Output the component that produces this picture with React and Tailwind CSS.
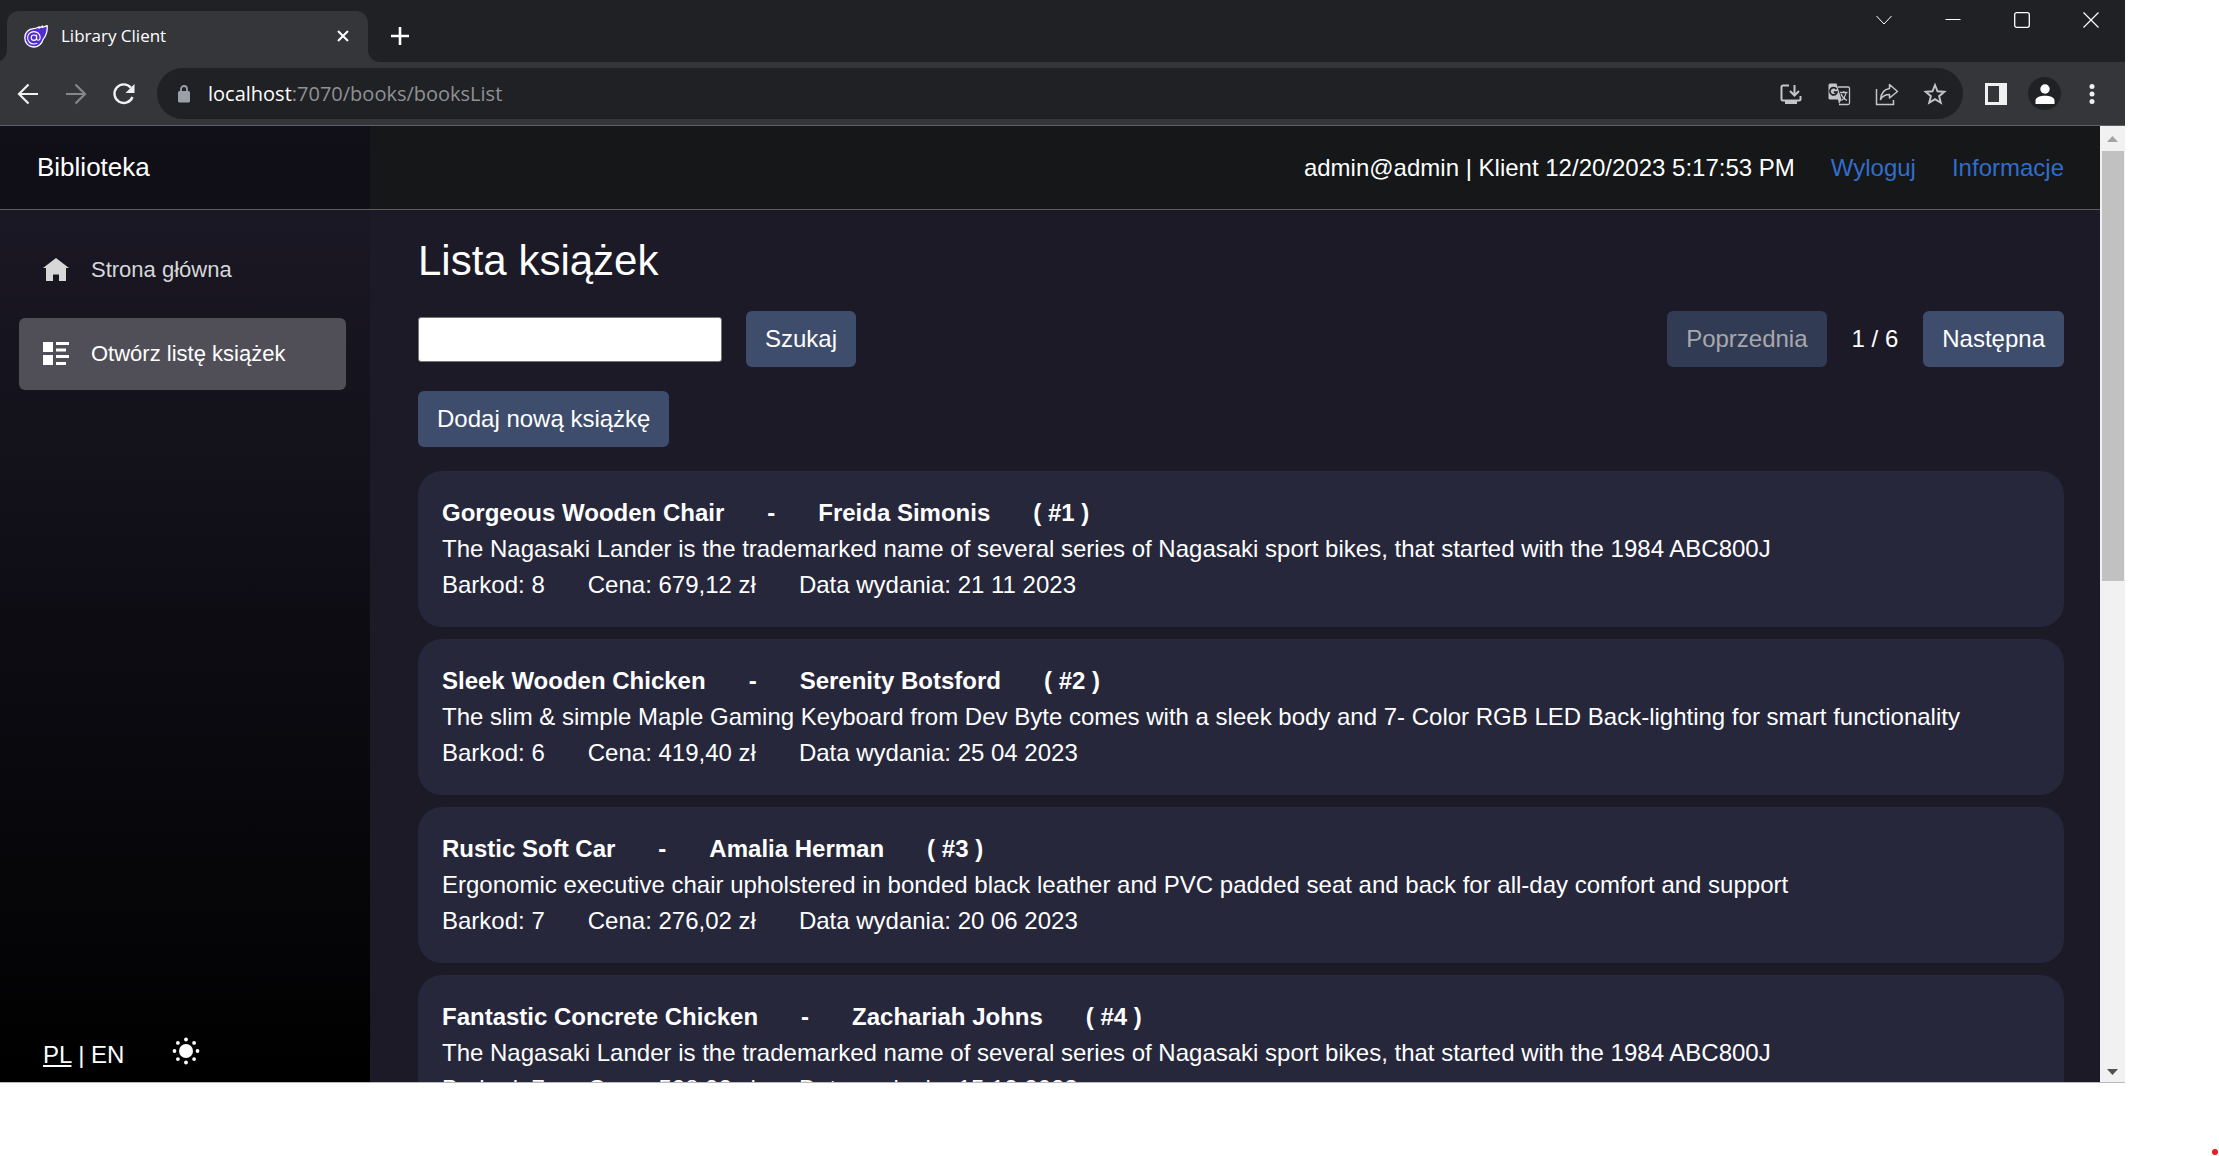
import React from "react";

const books = [
  { id: 1, title: "Gorgeous Wooden Chair", author: "Freida Simonis", text: "The Nagasaki Lander is the trademarked name of several series of Nagasaki sport bikes, that started with the 1984 ABC800J", code: "8", price: "679,12 zł", date: "21 11 2023" },
  { id: 2, title: "Sleek Wooden Chicken", author: "Serenity Botsford", text: "The slim & simple Maple Gaming Keyboard from Dev Byte comes with a sleek body and 7- Color RGB LED Back-lighting for smart functionality", code: "6", price: "419,40 zł", date: "25 04 2023" },
  { id: 3, title: "Rustic Soft Car", author: "Amalia Herman", text: "Ergonomic executive chair upholstered in bonded black leather and PVC padded seat and back for all-day comfort and support", code: "7", price: "276,02 zł", date: "20 06 2023" },
  { id: 4, title: "Fantastic Concrete Chicken", author: "Zachariah Johns", text: "The Nagasaki Lander is the trademarked name of several series of Nagasaki sport bikes, that started with the 1984 ABC800J", code: "7", price: "528,92 zł", date: "15 12 2023" },
];

const line = { fill: "none", stroke: "currentColor" };

function Favicon() {
  return (
    <svg viewBox="0 0 24 24" className="size-6">
      <path d="M23.2 1.600 C23.500 6.500 22.600 11.500 18.900 15.600 C18 20 14 23 9.700 23 C4.600 23 .8 19 .8 13.800 C.8 8.500 4.600 4.800 9.600 4.600 C12 4.500 13.600 4 15.200 2.800 L15 4.200 L18.400 2 L18.200 3.400 Z" fill="#512bd4" stroke="#fff" strokeWidth="1.3" strokeLinejoin="round" />
      <path d="M12.600 10.800 v3.800 c0 2.300 3.600 2.200 3.600 -.8 c0 -3.800 -2.900 -6.200 -6.300 -6.200 c-3.600 0 -6.300 2.700 -6.300 6.200 c0 3.600 2.700 6.200 6.300 6.200 c1.500 0 2.500 -.3 3.400 -.9" {...line} stroke="#fff" strokeWidth="1.1" />
      <circle cx="9.900" cy="13.700" r="2.700" {...line} stroke="#fff" strokeWidth="1.1" />
    </svg>
  );
}

function IconButton({ label, className, children }) {
  return (
    <button type="button" aria-label={label} className={"flex shrink-0 items-center justify-center " + (className || "")}>
      {children}
    </button>
  );
}

function TabStrip() {
  return (
    <div className="flex h-[62px] items-end bg-[#202124] pl-[7px] text-white">
      <div className="relative flex h-[51px] w-[361px] items-center rounded-t-xl bg-[#35363a] pb-0.5 pl-[17px] pr-[15px]">
        <svg viewBox="0 0 12 12" className="absolute -left-3 bottom-0 size-3"><path d="M12 0 V12 H0 A12 12 0 0 0 12 0" fill="#35363a" /></svg>
        <svg viewBox="0 0 12 12" className="absolute -right-3 bottom-0 size-3"><path d="M0 0 V12 H12 A12 12 0 0 1 0 0" fill="#35363a" /></svg>
        <Favicon />
        <span className="ml-[13px] flex-1 font-['Open_Sans',sans-serif] text-[17px]">Library Client</span>
        <IconButton label="Close tab" className="size-5">
          <svg viewBox="0 0 12 12" className="size-3"><path d="M1 1 L11 11 M11 1 L1 11" {...line} strokeWidth="2" /></svg>
        </IconButton>
      </div>
      <IconButton label="New tab" className="ml-[22px] h-[51px] w-5 pb-0.5">
        <svg viewBox="0 0 18 18" className="size-[18px]"><path d="M9 0 V18 M0 9 H18" {...line} strokeWidth="2.6" /></svg>
      </IconButton>
      <div className="ml-auto flex gap-[53px] self-start pr-[26px] pt-3">
        <IconButton label="Search tabs" className="size-4">
          <svg viewBox="0 0 16 16" className="size-4"><path d="M.5 4 L8 12 L15.500 4" {...line} strokeWidth="1" /></svg>
        </IconButton>
        <IconButton label="Minimize" className="size-4">
          <svg viewBox="0 0 16 16" className="size-4"><path d="M.5 7.500 H15.500" {...line} /></svg>
        </IconButton>
        <IconButton label="Maximize" className="size-4">
          <svg viewBox="0 0 16 16" className="size-4"><rect x=".7" y=".7" width="14.600" height="14.600" rx="2" {...line} strokeWidth="1.3" /></svg>
        </IconButton>
        <IconButton label="Close window" className="size-4">
          <svg viewBox="0 0 16 16" className="size-4"><path d="M.5 .5 L15.500 15.500 M15.500 .5 L.5 15.500" {...line} strokeWidth="1.2" /></svg>
        </IconButton>
      </div>
    </div>
  );
}

function Toolbar() {
  return (
    <div className="flex h-16 items-center border-b border-[#5f6063] bg-[#35363a] pl-4 pr-[25px] text-[#f1f1f1]">
      <IconButton label="Back" className="size-6">
        <svg viewBox="0 0 24 24" className="size-6"><path d="M22 12 H4 M12.500 2.500 L3 12 L12.500 21.500" {...line} strokeWidth="2.200" /></svg>
      </IconButton>
      <IconButton label="Forward" className="ml-6 size-6 text-[#86878a]">
        <svg viewBox="0 0 24 24" className="size-6"><path d="M2 12 H20 M11.500 2.500 L21 12 L11.500 21.500" {...line} strokeWidth="2.200" /></svg>
      </IconButton>
      <IconButton label="Reload" className="ml-6 size-6">
        <svg viewBox="0 0 24 24" className="size-6"><path d="M20.500 15 A9.300 9.300 0 1 1 18.800 5.600" {...line} strokeWidth="2.400" /><path d="M22.500 2 V11 H13.500 Z" fill="currentColor" /></svg>
      </IconButton>
      <div className="ml-[21px] flex h-[51px] min-w-0 flex-1 items-center rounded-full bg-[#202124] pl-5 pr-4">
        <svg viewBox="0 0 14 18" className="h-[18px] w-3.5"><rect x="1" y="6" width="12" height="11.500" rx="1.500" fill="#9aa0a6" /><path d="M4 7 V4 A3 3 0 0 1 10 4 V7" fill="none" stroke="#9aa0a6" strokeWidth="1.800" /></svg>
        <span className="ml-[17px] flex-1 whitespace-nowrap font-['Open_Sans',sans-serif] text-xl text-[#8f9194]"><span className="text-white">localhost</span>:7070/books/booksList</span>
        <div className="flex gap-6 text-[#c4c5c6]">
          <IconButton label="Install app" className="size-6">
            <svg viewBox="0 0 24 24" className="size-6"><path d="M10 3.500 H4 Q2.500 3.500 2.500 5 V17 Q2.500 18.500 4 18.500 H20 Q21.500 18.500 21.500 17 V14 M15.500 3 V13 M11 9 L15.500 13.500 L20 9" {...line} strokeWidth="2" /><path d="M6 18 H18 V22 H6 Z" fill="currentColor" /></svg>
          </IconButton>
          <IconButton label="Translate" className="size-6">
            <svg viewBox="0 0 24 24" className="size-6"><path d="M3 1.500 H9.500 L14.500 17.500 L12 22 L11 17.500 H3 Q1.500 17.500 1.500 16 V3 Q1.500 1.500 3 1.500" fill="currentColor" /><path d="M11 5 H21 Q22.500 5 22.500 6.500 V21 Q22.500 22.500 21 22.500 H12" {...line} strokeWidth="1.300" /><path d="M13 10.500 H20.500 M16.800 9 V10.500 M14 12 Q15.500 16 20 18.500 M19 10.500 Q18 16 14.500 18.500" {...line} strokeWidth="1.300" /><path d="M9.500 7.300 A3.600 3.600 0 1 0 10 10.200 H6.800" fill="none" stroke="#202124" strokeWidth="1.700" /></svg>
          </IconButton>
          <IconButton label="Share" className="size-6">
            <svg viewBox="0 0 24 24" className="size-6"><path d="M1.500 7 V22.500 H18.500 V18" {...line} strokeWidth="1.500" /><path d="M14.500 2.500 L22.500 9.500 L14.500 16 V12.500 Q8.500 12.500 5.500 17.500 Q6.500 7.500 14.500 6.500 Z" {...line} strokeWidth="1.500" strokeLinejoin="round" /></svg>
          </IconButton>
          <IconButton label="Bookmark" className="size-6">
            <svg viewBox="0 0 24 24" className="size-6"><path d="M12 3 L14.500 9.300 L21.300 9.800 L16.100 14.200 L17.800 20.800 L12 17.200 L6.200 20.800 L7.900 14.200 L2.700 9.800 L9.500 9.300 Z" {...line} strokeWidth="1.900" /></svg>
          </IconButton>
        </div>
      </div>
      <IconButton label="Side panel" className="ml-[22px] size-[22px]">
        <svg viewBox="0 0 22 22" className="size-[22px]"><path fillRule="evenodd" d="M0 0 H22 V22 H0 Z M3 3 V19 H14 V3 Z" fill="currentColor" /></svg>
      </IconButton>
      <IconButton label="Profile" className="ml-[21px] size-[33px] rounded-full bg-[#202124] text-white">
        <svg viewBox="0 0 20 20" className="size-5"><circle cx="10" cy="5" r="4.700" fill="currentColor" /><path d="M.5 20 V16.500 C.5 13 6 11.800 10 11.800 C14 11.800 19.500 13 19.500 16.500 V20 Z" fill="currentColor" /></svg>
      </IconButton>
      <IconButton label="Menu" className="ml-[23px] h-6 w-4">
        <svg viewBox="0 0 16 24" className="h-6 w-4"><g fill="currentColor"><circle cx="8" cy="4.500" r="2.500" /><circle cx="8" cy="12" r="2.500" /><circle cx="8" cy="19.500" r="2.500" /></g></svg>
      </IconButton>
    </div>
  );
}

function Sidebar() {
  return (
    <aside className="flex w-[370px] shrink-0 flex-col bg-linear-to-b/srgb from-[#1d1a28] to-black">
      <div className="flex h-[84px] shrink-0 items-center border-b border-[#5d5c61] bg-black/40 pb-0.5 pl-[37px]">
        <a href="#home" className="text-[26px] leading-9">Biblioteka</a>
      </div>
      <nav className="flex flex-col gap-3 pl-[19px] pr-6 pt-6 text-[22px] text-[#d7d7d7]">
        <a href="#home" className="flex h-[72px] items-center rounded-md pl-6">
          <svg viewBox="0 0 26 24" className="h-6 w-[26px]"><path d="M13 0 L26 10 H23 V23 H16 V16.500 H10 V23 H3 V10 H0 Z" fill="currentColor" /></svg>
          <span className="ml-[22px]">Strona główna</span>
        </a>
        <a href="#books" className="flex h-[72px] items-center rounded-md bg-[#504e57] pl-6 text-white">
          <svg viewBox="0 0 26 24" className="h-6 w-[26px]"><path d="M0 0 H10 V10 H0 Z M0 13 H10 V23 H0 Z M13 0 H26 V3 H13 Z M13 6.500 H23 V9.500 H13 Z M13 13 H26 V16 H13 Z M13 20 H23 V23 H13 Z" fill="currentColor" /></svg>
          <span className="ml-[22px]">Otwórz listę książek</span>
        </a>
      </nav>
      <div className="mt-auto flex items-center pb-[9px] pl-[43px]">
        <p className="pt-2"><a href="#pl" className="underline">PL</a> | <a href="#en">EN</a></p>
        <IconButton label="Light theme" className="ml-12 size-7">
          <svg viewBox="0 0 28 28" className="size-7">
            <g fill="currentColor">
              <circle cx="14" cy="14" r="7" />
              <circle cx="14" cy="2.500" r="1.900" /><circle cx="14" cy="25.500" r="1.900" /><circle cx="2.500" cy="14" r="1.900" /><circle cx="25.500" cy="14" r="1.900" />
              <circle cx="5.900" cy="5.900" r="1.900" /><circle cx="22.100" cy="5.900" r="1.900" /><circle cx="5.900" cy="22.100" r="1.900" /><circle cx="22.100" cy="22.100" r="1.900" />
            </g>
          </svg>
        </IconButton>
      </div>
    </aside>
  );
}

const buttonClass = "h-14 rounded-md bg-[#3e4d6c] px-[19px] disabled:bg-[#313b54] disabled:text-[#a8a8ac]";

function BookCard({ book }) {
  return (
    <article className="rounded-3xl bg-[#27273b] p-6">
      <h2 className="flex gap-[43px] font-bold">
        <span>{book.title}</span><span>-</span><span>{book.author}</span><span>( #{book.id} )</span>
      </h2>
      <p>{book.text}</p>
      <p className="flex gap-[43px]">
        <span>Barkod: {book.code}</span><span>Cena: {book.price}</span><span>Data wydania: {book.date}</span>
      </p>
    </article>
  );
}

function Scrollbar() {
  return (
    <div className="flex w-[25px] shrink-0 flex-col items-center bg-[#f1f1f1]">
      <svg viewBox="0 0 25 25" className="size-[25px] shrink-0"><path d="M7 16 L12.500 10 L18 16 Z" fill="#a3a3a3" /></svg>
      <div className="h-[45%] w-[22px] bg-[#c1c1c1]" />
      <svg viewBox="0 0 25 25" className="mt-auto size-[25px] shrink-0"><path d="M7 12 L12.500 18 L18 12 Z" fill="#505050" /></svg>
    </div>
  );
}

export default function App() {
  return (
    <div className="flex h-screen flex-col bg-white pb-[73px] pr-[94px] font-['Liberation_Sans',Arial,sans-serif] text-2xl leading-9 text-white">
      <div className="flex min-h-0 flex-1 flex-col overflow-hidden border-b border-[#b9b8bc]">
        <TabStrip />
        <Toolbar />
        <div className="flex min-h-0 flex-1 bg-[#1d1a28]">
          <Sidebar />
          <main className="min-w-0 flex-1 overflow-hidden">
            <header className="flex h-[84px] items-center justify-end gap-9 border-b border-[#5d5d5f] bg-[#151718] pr-9">
              <span>admin@admin | Klient 12/20/2023 5:17:53 PM</span>
              <a href="#logout" className="text-[#316dca]">Wyloguj</a>
              <a href="#info" className="text-[#316dca]">Informacje</a>
            </header>
            <div className="pl-12 pr-9 pt-[25px]">
              <h1 className="text-[42px] leading-[52px]">Lista książek</h1>
              <div className="mt-6 flex items-center">
                <input type="text" aria-label="Szukaj" className="h-[45px] w-[304px] rounded-[3px] border border-[#767676] bg-white px-2 text-black" />
                <button type="button" className={buttonClass + " ml-6"}>Szukaj</button>
                <button type="button" disabled className={buttonClass + " ml-auto"}>Poprzednia</button>
                <span className="mx-[25px]">1 / 6</span>
                <button type="button" className={buttonClass}>Następna</button>
              </div>
              <button type="button" className={buttonClass + " mt-6 block"}>Dodaj nową książkę</button>
              <div className="mt-6 flex flex-col gap-3">
                {books.map((book) => <BookCard key={book.id} book={book} />)}
              </div>
            </div>
          </main>
          <Scrollbar />
        </div>
      </div>
      <span className="absolute bottom-px right-px size-1.5 rounded-full bg-[#ed1c24]" />
    </div>
  );
}
